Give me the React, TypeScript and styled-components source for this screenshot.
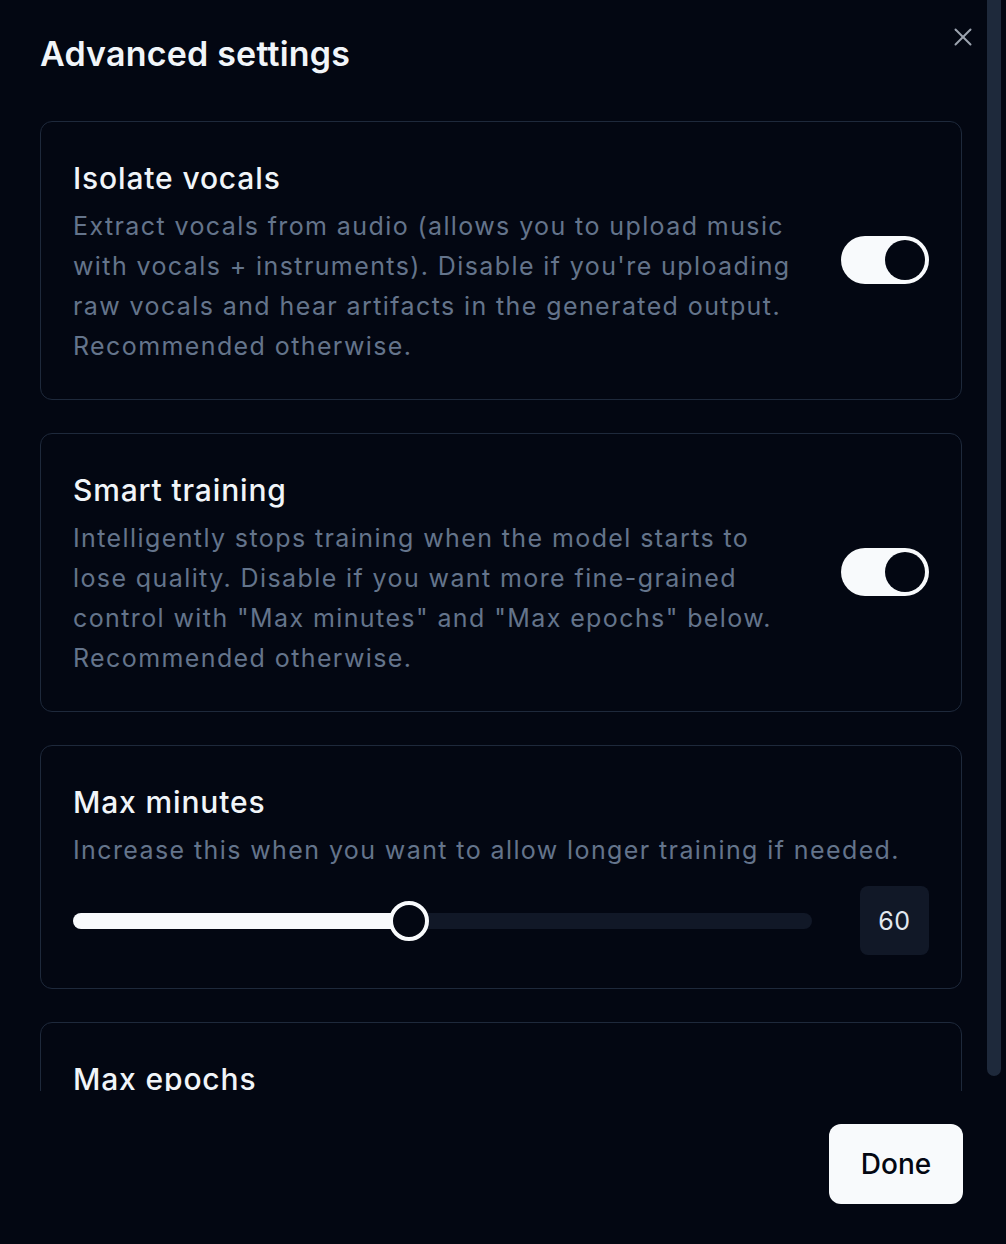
import React, { useState } from 'react';
import styled, { createGlobalStyle } from 'styled-components';
import { X } from 'lucide-react';

const GlobalStyle = createGlobalStyle`
  html, body {
    margin: 0;
    padding: 0;
    background: #030712;
  }
  body {
    font-family: Inter, "Noto Sans", sans-serif;
    -webkit-font-smoothing: antialiased;
  }
  * {
    box-sizing: border-box;
  }
`;

const Page = styled.div`
  display: flex;
  width: 1006px;
  height: 1244px;
  background: #030712;
  overflow: hidden;
`;

const Dialog = styled.div`
  position: relative;
  flex: 1;
  display: flex;
  flex-direction: column;
  padding: 34px 25px 40px 40px;
`;

const Title = styled.h2`
  margin: 0 0 47px;
  font-size: 34px;
  line-height: 40px;
  font-weight: 600;
  color: #f1f5f9;
  letter-spacing: 0.2px;
`;

const CloseButton = styled.button`
  position: absolute;
  top: 22px;
  right: 9px;
  display: flex;
  padding: 0;
  border: none;
  background: none;
  color: #9ca3af;
  cursor: pointer;
`;

const ScrollArea = styled.div`
  height: 970px;
  overflow: hidden;
  display: flex;
  flex-direction: column;
  gap: 33px;
`;

const Card = styled.div`
  flex-shrink: 0;
  border: 1px solid #1e293b;
  border-radius: 12px;
  padding: 32px 32px 33px;
`;

const CardRow = styled.div`
  display: flex;
  align-items: center;
  gap: 40px;
`;

const CardText = styled.div`
  flex: 1;
`;

const CardTitle = styled.div`
  font-size: 30px;
  line-height: 48px;
  margin-bottom: 4px;
  font-weight: 500;
  color: #f1f5f9;
  letter-spacing: 0.85px;
`;

const CardDesc = styled.div`
  font-size: 25px;
  line-height: 40px;
  color: #64748b;
  letter-spacing: 1.4px;
`;

const Toggle = styled.button<{ $on: boolean }>`
  flex-shrink: 0;
  display: flex;
  justify-content: ${(p) => (p.$on ? 'flex-end' : 'flex-start')};
  width: 88px;
  height: 48px;
  padding: 4px;
  border: none;
  border-radius: 24px;
  background: ${(p) => (p.$on ? '#f8fafc' : '#1e293b')};
  cursor: pointer;
`;

const Knob = styled.span`
  width: 40px;
  height: 40px;
  border-radius: 50%;
  background: #030712;
`;

const SliderRow = styled.div`
  display: flex;
  align-items: center;
  gap: 48px;
  margin-top: 16px;
`;

const Track = styled.div`
  position: relative;
  flex: 1;
  height: 16px;
  border-radius: 8px;
  background: #111827;
`;

const Fill = styled.div`
  height: 100%;
  border-radius: 8px;
  background: #f8fafc;
`;

const Thumb = styled.div`
  position: absolute;
  top: 50%;
  width: 40px;
  height: 40px;
  border-radius: 50%;
  border: 4px solid #f8fafc;
  background: #030712;
  transform: translate(-50%, -50%);
`;

const ValueBox = styled.div`
  display: flex;
  align-items: center;
  justify-content: center;
  width: 69px;
  height: 69px;
  border-radius: 8px;
  background: #111827;
  color: #e2e8f0;
  font-size: 25px;
  letter-spacing: 0.5px;
`;

const Footer = styled.div`
  display: flex;
  justify-content: flex-end;
  margin-top: 33px;
`;

const DoneButton = styled.button`
  width: 134px;
  height: 80px;
  border: none;
  border-radius: 12px;
  background: #f8fafc;
  color: #030712;
  font-family: inherit;
  font-size: 28px;
  font-weight: 500;
  margin-right: -1px;
  cursor: pointer;
`;

const ScrollRail = styled.div`
  width: 19px;
  flex-shrink: 0;
`;

const ScrollThumb = styled.div`
  width: 14px;
  height: 1076px;
  border-radius: 0 0 7px 7px;
  background: #1e293b;
`;

type ToggleSetting = { title: string; desc: string };

const toggles: ToggleSetting[] = [
  {
    title: 'Isolate vocals',
    desc: "Extract vocals from audio (allows you to upload music with vocals + instruments). Disable if you're uploading raw vocals and hear artifacts in the generated output. Recommended otherwise.",
  },
  {
    title: 'Smart training',
    desc: 'Intelligently stops training when the model starts to lose quality. Disable if you want more fine-grained control with "Max minutes" and "Max epochs" below. Recommended otherwise.',
  },
];

const MIN = 10;
const MAX = 120;

const App: React.FC = () => {
  const [flags, setFlags] = useState<boolean[]>([true, true]);
  const minutes = 60;
  const pct = ((minutes - MIN) / (MAX - MIN)) * 100;

  return (
    <Page>
      <GlobalStyle />
      <Dialog>
        <Title>Advanced settings</Title>
        <CloseButton aria-label="Close">
          <X size={30} strokeWidth={1.6} />
        </CloseButton>
        <ScrollArea>
          {toggles.map((t, i) => (
            <Card key={t.title}>
              <CardRow>
                <CardText>
                  <CardTitle>{t.title}</CardTitle>
                  <CardDesc>{t.desc}</CardDesc>
                </CardText>
                <Toggle
                  $on={flags[i]}
                  onClick={() =>
                    setFlags((f) => f.map((v, j) => (j === i ? !v : v)))
                  }
                >
                  <Knob />
                </Toggle>
              </CardRow>
            </Card>
          ))}
          <Card>
            <CardTitle>Max minutes</CardTitle>
            <CardDesc>
              Increase this when you want to allow longer training if needed.
            </CardDesc>
            <SliderRow>
              <Track>
                <Fill style={{ width: `${pct}%` }} />
                <Thumb style={{ left: `${pct}%` }} />
              </Track>
              <ValueBox>{minutes}</ValueBox>
            </SliderRow>
          </Card>
          <Card>
            <CardTitle>Max epochs</CardTitle>
            <CardDesc>
              Increase this to train longer if the model has not converged.
            </CardDesc>
          </Card>
        </ScrollArea>
        <Footer>
          <DoneButton>Done</DoneButton>
        </Footer>
      </Dialog>
      <ScrollRail>
        <ScrollThumb />
      </ScrollRail>
    </Page>
  );
};

export default App;
